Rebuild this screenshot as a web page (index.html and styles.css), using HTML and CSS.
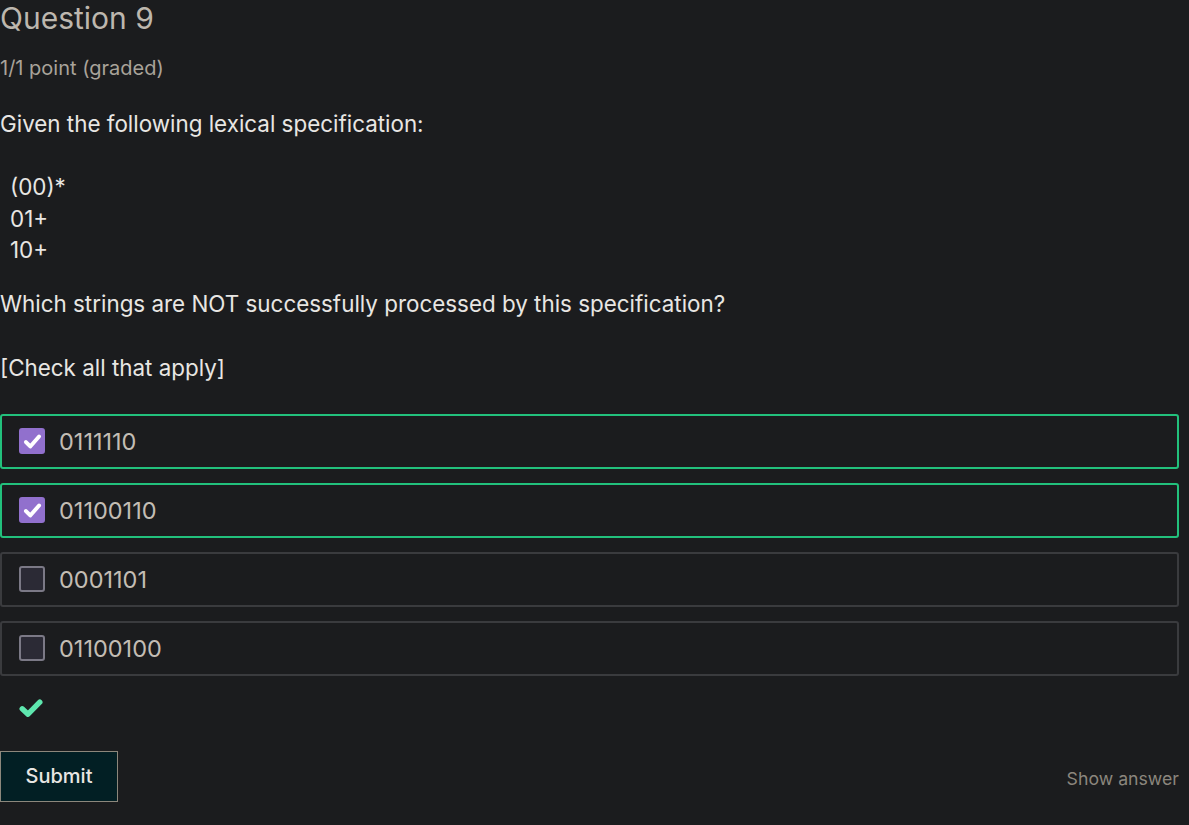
FILE: index.html
```html
<!DOCTYPE html>
<html lang="en">
<head>
<meta charset="utf-8">
<title>Question 9</title>
<link rel="stylesheet" href="styles.css">
</head>
<body>
<div class="problem">
  <h3 class="title">Question 9</h3>
  <div class="points">1/1 point (graded)</div>
  <p class="prompt">Given the following lexical specification:</p>
  <p class="spec">(00)*<br>01+<br>10+</p>
  <p class="prompt">Which strings are NOT successfully processed by this specification?</p>
  <p class="prompt">[Check all that apply]</p>
  <div class="choices">
    <label class="choice correct">
      <span class="box checked"><svg viewBox="0 0 16 16" width="21" height="21"><path d="M3 8.4 L6.3 11.8 L13 4.2" fill="none" stroke="#ffffff" stroke-width="3" stroke-linecap="round" stroke-linejoin="round"/></svg></span>
      <span class="label">0111110</span>
    </label>
    <label class="choice correct">
      <span class="box checked"><svg viewBox="0 0 16 16" width="21" height="21"><path d="M3 8.4 L6.3 11.8 L13 4.2" fill="none" stroke="#ffffff" stroke-width="3" stroke-linecap="round" stroke-linejoin="round"/></svg></span>
      <span class="label">01100110</span>
    </label>
    <label class="choice">
      <span class="box"></span>
      <span class="label">0001101</span>
    </label>
    <label class="choice">
      <span class="box"></span>
      <span class="label">01100100</span>
    </label>
  </div>
  <div class="status">
    <svg viewBox="0 0 24 20" width="24" height="20"><path d="M3.2 10.8 L9 16.2 L20.8 4.2" fill="none" stroke="#5ee6ae" stroke-width="5.4" stroke-linecap="round" stroke-linejoin="round"/></svg>
  </div>
  <div class="actions">
    <button class="submit">Submit</button>
    <span class="show">Show answer</span>
  </div>
</div>
</body>
</html>
```
FILE: styles.css
```css
html, body {
  margin: 0;
  padding: 0;
  background: #1b1c1e;
}
body {
  font-family: Inter, "Noto Sans", sans-serif;
  color: #e8e6e3;
  width: 1179px;
}
.problem {
  display: flex;
  flex-direction: column;
}
.title {
  margin: 0;
  font-size: 30px;
  font-weight: 400;
  line-height: 36px;
  color: #bdb7ae;
}
.points {
  margin-top: 19px;
  font-size: 20px;
  line-height: 26px;
  color: #a9a39a;
}
.prompt {
  margin: 0;
  font-size: 22.4px;
  line-height: 32px;
}
.points + .prompt { margin-top: 27px; }
.spec {
  margin: 31px 0 22px;
  padding-left: 10px;
  font-size: 22.4px;
  line-height: 31.5px;
}
.prompt + .prompt { margin-top: 32px; }
.choices {
  margin-top: 30px;
  display: flex;
  flex-direction: column;
  gap: 14px;
}
.choice {
  display: flex;
  align-items: center;
  gap: 14px;
  height: 51px;
  padding: 0 17px;
  border: 2px solid #3a3b3e;
  border-radius: 3px;
  color: #c3bdb4;
  font-size: 23.5px;
}
.choice.correct {
  border-color: #22c07c;
}
.box {
  width: 22px;
  height: 22px;
  border: 2px solid #7b7986;
  background: #2b2a35;
  border-radius: 3px;
  display: flex;
  align-items: center;
  justify-content: center;
}
.box.checked {
  background: #9170cd;
  border-color: #9170cd;
}
.status {
  margin-top: 22px;
  padding-left: 19px;
  height: 20px;
}
.actions {
  margin-top: 33px;
  display: flex;
  justify-content: space-between;
  align-items: center;
}
.submit {
  width: 118px;
  height: 51px;
  background: #021f24;
  border: 1px solid #8c877c;
  color: #e8e6e3;
  font-family: Inter, "Noto Sans", sans-serif;
  font-size: 20px;
  font-weight: 500;
  padding: 0;
}
.show {
  font-size: 17.7px;
  color: #8b867d;
  margin-top: 4px;
}
```
